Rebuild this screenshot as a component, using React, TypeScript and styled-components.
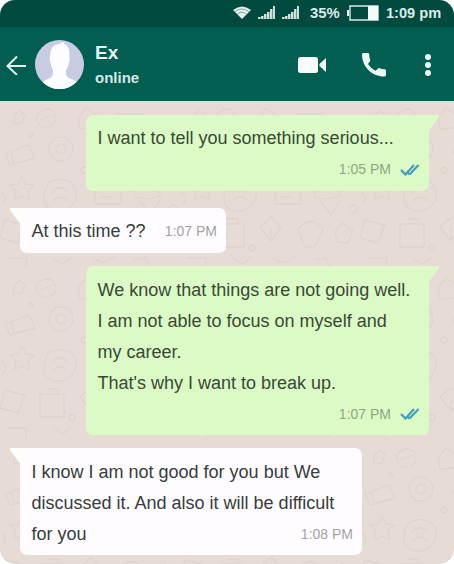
import React from "react";
import styled, { createGlobalStyle, css } from "styled-components";

const Global = createGlobalStyle`
  body { margin: 0; background: #fff; }
  * { box-sizing: border-box; }
`;

const Phone = styled.main`
  position: relative;
  display: flex;
  flex-direction: column;
  width: 454px;
  height: 564px;
  overflow: hidden;
  border-radius: 15px;
  background: #e6dcd5;
  font-family: "Liberation Sans", Arial, sans-serif;
`;

const StatusBar = styled.div`
  display: flex;
  align-items: center;
  justify-content: flex-end;
  height: 27px;
  padding: 0 13px 2px 0;
  background: #004a3f;
  color: #dcebe7;
  font-size: 14.8px;
  font-weight: bold;
  line-height: 24px;
  white-space: nowrap;
`;

const StatusIcon = styled.svg<{ $gap: number }>`
  flex: none;
  margin-right: ${(p) => p.$gap}px;
`;

const Percent = styled.span`
  width: 31px;
  margin-right: 5px;
`;

const Clock = styled.span`
  width: 55px;
  font-size: 14.6px;
`;

const Header = styled.header`
  display: flex;
  align-items: center;
  height: 74px;
  padding: 0 22px 0 5px;
  background: #015e51;
  color: #eef8f5;
`;

const Avatar = styled.svg`
  flex: none;
  margin: 1px 11px 0 9px;
`;

const Contact = styled.div`
  flex: 1;
  display: flex;
  flex-direction: column;
  padding-top: 1px;
  font-weight: bold;
`;

const Name = styled.span`
  font-size: 19px;
  line-height: 25px;
`;

const Presence = styled.span`
  color: #d5e8e3;
  font-size: 15px;
  line-height: 25px;
`;

const Actions = styled.div`
  display: flex;
  align-items: center;
  padding-top: 1px;
`;

const Chat = styled.section`
  position: relative;
  flex: 1;
  display: flex;
  flex-direction: column;
  align-items: flex-start;
  padding: 14px 25px 0 20px;
`;

const Wallpaper = styled.svg`
  position: absolute;
  inset: 0;
  width: 100%;
  height: 100%;
`;

const Bubble = styled.article<{ $mine?: boolean; $width: number; $height: number; $gap: number; $top?: number }>`
  position: relative;
  width: ${(p) => p.$width}px;
  height: ${(p) => p.$height}px;
  margin-bottom: ${(p) => p.$gap}px;
  padding: ${(p) => p.$top ?? 8}px 9px 0 11.5px;
  color: #383c3d;
  background: #fefcfe;
  border-radius: 0 7px 7px 7px;
  ${(p) =>
    p.$mine &&
    css`
      align-self: flex-end;
      color: #384934;
      background: #dcfac6;
      border-radius: 7px 0 7px 7px;
    `}
  &::before {
    content: "";
    position: absolute;
    top: 0;
    ${(p) => (p.$mine ? "right: -10px;" : "left: -10px;")}
    width: 11px;
    height: 17px;
    background: inherit;
    clip-path: ${(p) => (p.$mine ? "polygon(0 0, 100% 0, 100% 2px, 0 100%)" : "polygon(0 0, 100% 0, 100% 100%, 0 2px)")};
  }
`;

const Line = styled.div`
  font-size: 18px;
  line-height: 31px;
  white-space: nowrap;
`;

const Split = styled.div`
  display: flex;
  justify-content: space-between;
  align-items: center;
`;

const Time = styled.time<{ $mine?: boolean }>`
  color: ${(p) => (p.$mine ? "#90a681" : "#a3a2a3")};
  font-size: 14px;
  line-height: 31px;
`;

const Receipt = styled.div`
  display: flex;
  align-items: center;
  justify-content: flex-end;
  gap: 9px;
`;

const Ticks = () => (
  <svg width="20" height="12" viewBox="0 0 20 12" fill="none" stroke="#409fbb" strokeWidth="2.2">
    <path d="m1 6 4.500 4.500L14 1M9.500 10.500 18.500 1M8 9l1.500 1.500" />
  </svg>
);

const Delivered = ({ at }: { at: string }) => (
  <Receipt>
    <Time $mine>{at}</Time>
    <Ticks />
  </Receipt>
);

const Signal = ({ gap }: { gap: number }) => (
  <StatusIcon $gap={gap} width="18" height="15" viewBox="0 0 18 15" fill="#cfe0dc">
    <path d="M0 12h2v2H0zM3 11h2v3H3zM6 9h2v5H6zM9 7h2v7H9zM12 4h2v10h-2zM15 1h2v13h-2z" />
    <path d="M0 14v-2h3v-1h3V9h3V7h3V4h3V1h2v13z" opacity=".5" />
  </StatusIcon>
);

const Doodles = () => (
  <Wallpaper aria-hidden="true">
    <defs>
      <pattern id="doodles" width="180" height="170" patternUnits="userSpaceOnUse">
        <g fill="none" stroke="#d8cdc7" strokeWidth="1.3" opacity=".55" strokeLinejoin="round">
          <path d="m14 15 5-6 6 5-3 8-8 1zM47 8c-10 1-13 8-9 14 5 8 19 3 18-5-1-5-4-9-9-9zM40 19l13-5" />
          <path d="m5 53 24-9 6 13-25 7zM11 50l3 13M78 17l8-10 11 7-3 13-14 1zM117 13h25l-4 18h-17zM117 20h24" />
          <circle cx="61" cy="48" r="12" />
          <circle cx="61" cy="48" r="5" />
          <path d="m92 50 12-10 9 12-13 10zM125 54c11-17 29-9 33 2-8-3-20-3-33 2zM143 57v15q5 3 7-2M165 14q10 4 4 16M163 21l7 5" />
          <path d="m18 83 4-8 4 8 8 1-6 6 2 9-8-4-8 4 2-9-6-6zM48 82c17-9 33 1 27 17s-30 13-31 1c-1-8 2-12 4-18zM52 92q7-10 15-1M53 100q8-8 14 0" />
          <path d="M95 82h26v21H95zM99 78h17v4M101 89h14M101 96h10M137 88q8-11 14 0 10-1 9 7-12 5-25 1-2-5 2-8zM140 100l11 14 9-15" />
          <path d="m5 119 20 5-7 18-18-5zM40 123h24v23H40zM47 118h11v5M80 126l11-10 10 10-10 14zM91 127v12M118 128q14-15 25 0l-8 18h-10z" />
          <path d="m155 131 7-9 11 8-5 12-11-1zM7 157h19v10M54 158l9 5 8-7M94 157q9 9 21-2M134 159l12-2 4 9M176 48l-7 10 7 3M1 91q8 4 2 12" />
          <circle cx="31" cy="34" r="2" />
          <circle cx="109" cy="34" r="3" />
          <circle cx="84" cy="69" r="3" />
          <circle cx="128" cy="78" r="2" />
          <circle cx="72" cy="147" r="3" />
          <circle cx="173" cy="108" r="4" />
        </g>
      </pattern>
    </defs>
    <rect width="100%" height="100%" fill="url(#doodles)" />
  </Wallpaper>
);

export default function App() {
  return (
    <>
      <Global />
      <Phone>
        <StatusBar>
          <StatusIcon $gap={7} width="18" height="14" viewBox="0 0 18 14" fill="#e4efec">
            <path d="M9 13 0 4Q9-3 18 4z" />
            <path d="M2 5.500q7-5 14 0M4.500 8q4.500-3.500 9 0" fill="none" stroke="#5b8a81" strokeWidth=".7" />
          </StatusIcon>
          <Signal gap={6} />
          <Signal gap={10} />
          <Percent>35%</Percent>
          <StatusIcon $gap={6} width="34" height="16" viewBox="0 0 34 16">
            <path d="M4 1h28v14H4z" fill="none" stroke="#dceae6" strokeWidth="1.400" />
            <path d="M22 1h10v14H22zM1 5h2v6H1z" fill="#f4faf9" />
          </StatusIcon>
          <Clock>1:09 pm</Clock>
        </StatusBar>
        <Header>
          <svg width="21" height="22" viewBox="0 0 21 22" fill="none" stroke="#e4f2ef" strokeWidth="2">
            <path d="M21 13H2.500M12 3.500 2.500 13 12 22" />
          </svg>
          <Avatar width="49" height="49" viewBox="0 0 49 49">
            <defs>
              <clipPath id="face"><circle cx="24.500" cy="24.500" r="24.500" /></clipPath>
            </defs>
            <g clipPath="url(#face)">
              <path d="M0 0h49v49H0z" fill="#c7cce2" />
              <path d="M8 49V43q1-3 5-4 6-2 5-9-2-3-2.500-8-1.500-2-.5-5 0-9 5-12 5-1 8-3 1 2 3 3 4 3 3.500 12 1 3-.5 5-.5 5-3 8-1 7 5 9 5 1 6 4v6z" fill="#fdfdff" />
            </g>
          </Avatar>
          <Contact>
            <Name>Ex</Name>
            <Presence>online</Presence>
          </Contact>
          <Actions>
            <StatusIcon $gap={35} width="29" height="18" viewBox="0 0 29 18" fill="#f5fcfa">
              <rect y="1" width="20" height="16" rx="2.500" />
              <path d="m21.500 8 6.500-6v14l-6.500-6z" />
            </StatusIcon>
            <StatusIcon $gap={38} width="24" height="24" viewBox="0 0 25 25" fill="#eef8f6">
              <path d="M1.500 0H6q1.500 0 1.500 1.500 0 3 1 5.500.4 1-.5 2L6.200 11.500Q9 16 14 18.500l2.500-2.200q.7-.8 1.700-.5Q21 17 23.500 17 25 17 25 18.500V23q0 1.500-1.500 1.500C10 24.500 0 14 0 1.500Q0 0 1.500 0z" />
            </StatusIcon>
            <svg width="8" height="24" viewBox="0 0 8 24" fill="#edf8f5">
              <circle cx="4" cy="4" r="3" /><circle cx="4" cy="12" r="3" /><circle cx="4" cy="20" r="3" />
            </svg>
          </Actions>
        </Header>
        <Chat>
          <Doodles />
          <Bubble $mine $width={343} $height={76} $gap={17}>
            <Line>I want to tell you something serious...</Line>
            <Delivered at="1:05 PM" />
          </Bubble>
          <Bubble $width={206} $height={45} $gap={13}>
            <Split><Line>At this time ??</Line><Time>1:07 PM</Time></Split>
          </Bubble>
          <Bubble $mine $width={343} $height={169} $gap={13} $top={8.6}>
            <Line>We know that things are not going well.</Line>
            <Line>I am not able to focus on myself and</Line>
            <Line>my career.</Line>
            <Line>That's why I want to break up.</Line>
            <Delivered at="1:07 PM" />
          </Bubble>
          <Bubble $width={342} $height={107} $gap={0} $top={8.6}>
            <Line>I know I am not good for you but We</Line>
            <Line>discussed it. And also it will be difficult</Line>
            <Split><Line>for you</Line><Time>1:08 PM</Time></Split>
          </Bubble>
        </Chat>
      </Phone>
    </>
  );
}
